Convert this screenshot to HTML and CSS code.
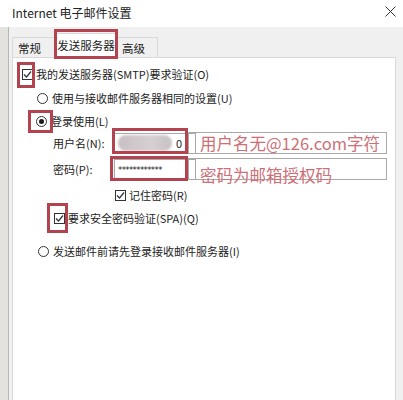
FILE: index.html
```html
<!DOCTYPE html>
<html lang="zh">
<head>
<meta charset="utf-8">
<link rel="stylesheet" href="styles.css">
</head>
<body>
<div class="screen">
  <div class="titlebar">
    <span class="title">Internet 电子邮件设置</span>
    <svg class="close" width="11" height="11" viewBox="0 0 11 11"><path d="M0.5 0.5 L10.5 10.5 M10.5 0.5 L0.5 10.5" stroke="#333" stroke-width="1" fill="none"/></svg>
  </div>
  <div class="main">
    <div class="bgstrip"></div>
    <div class="dialog">
      <div class="tabs">
        <div class="tab tab-general">常规</div>
        <div class="tab tab-active">发送服务器</div>
        <div class="tab tab-adv">高级</div>
      </div>
      <div class="panel">
        <div class="row r1">
          <span class="cb"><svg width="9" height="9" viewBox="0 0 9 9"><path d="M1 4.5 L3.5 7 L8 1.5" stroke="#2b3440" stroke-width="1.2" fill="none"/></svg></span>
          <span class="lbl">我的发送服务器(SMTP)要求验证(O)</span>
        </div>
        <div class="row r2">
          <span class="rb"></span>
          <span class="lbl">使用与接收邮件服务器相同的设置(U)</span>
        </div>
        <div class="row r3">
          <span class="rb on"><span class="dot"></span></span>
          <span class="lbl">登录使用(L)</span>
        </div>
        <div class="row r4">
          <span class="flabel">用户名(N):</span>
          <span class="field"><span class="blur"></span><span class="zero">0</span></span>
        </div>
        <div class="row r5">
          <span class="flabel">密码(P):</span>
          <span class="field"><span class="stars">************</span></span>
        </div>
        <div class="row r6">
          <span class="cb"><svg width="9" height="9" viewBox="0 0 9 9"><path d="M1 4.5 L3.5 7 L8 1.5" stroke="#2b3440" stroke-width="1.2" fill="none"/></svg></span>
          <span class="lbl">记住密码(R)</span>
        </div>
        <div class="row r7">
          <span class="cb"><svg width="9" height="9" viewBox="0 0 9 9"><path d="M1 4.5 L3.5 7 L8 1.5" stroke="#2b3440" stroke-width="1.2" fill="none"/></svg></span>
          <span class="lbl">要求安全密码验证(SPA)(Q)</span>
        </div>
        <div class="row r8">
          <span class="rb"></span>
          <span class="lbl">发送邮件前请先登录接收邮件服务器(I)</span>
        </div>
      </div>
    </div>
  </div>

  <div class="mark m-tab"></div>
  <div class="mark m-cb1"></div>
  <div class="mark m-rb"></div>
  <div class="mark m-user"></div>
  <div class="mark m-pass"></div>
  <div class="mark m-spa"></div>
  <div class="note n-user">用户名无@126.com字符</div>
  <div class="note n-pass">密码为邮箱授权码</div>
</div>
</body>
</html>
```

FILE: styles.css
```css
* { box-sizing: border-box; }
html, body { margin: 0; padding: 0; }
body {
  width: 403px;
  height: 400px;
  overflow: hidden;
  background: #f0f0f0;
  font-family: "Noto Sans CJK SC", "Noto Sans", sans-serif;
  font-size: 11px;
  color: #1c1c1c;
}
.screen {
  position: relative;
  width: 403px;
  height: 400px;
  display: flex;
  flex-direction: column;
}
.titlebar {
  height: 27px;
  background: #ffffff;
  display: flex;
  align-items: center;
  justify-content: space-between;
  padding: 0 7px 2px 12px;
  flex: none;
}
.title { font-size: 12px; color: #222; }
.close { margin-top: -2px; }
.main {
  flex: 1;
  display: flex;
  min-height: 0;
}
.bgstrip {
  width: 9px;
  background: #e4e2df;
  border-right: 1px solid #b8b6b2;
  flex: none;
}
.dialog {
  flex: 1;
  display: flex;
  flex-direction: column;
  padding: 0 7px 0 3px;
}
.tabs {
  height: 30px;
  display: flex;
  align-items: flex-end;
  flex: none;
}
.tab {
  height: 21px;
  border: 1px solid #d9d9d9;
  border-bottom: none;
  background: #f0f0f0;
  display: flex;
  align-items: center;
  justify-content: flex-start;
  font-size: 11.5px;
  margin-bottom: -1px;
}
.tab-general { width: 44px; padding-left: 5px; }
.tab-active {
  width: 60px;
  height: 25px;
  background: #ffffff;
  position: relative;
  z-index: 2;
  padding-bottom: 3px;
  justify-content: center;
}
.tab-adv { width: 42px; border-left: none; padding-left: 6px; }
.panel {
  flex: 1;
  background: #ffffff;
  border: 1px solid #d9d9d9;
  border-bottom: none;
  padding: 6px 0 0 9px;
  display: flex;
  flex-direction: column;
}
.row {
  height: 20px;
  display: flex;
  align-items: center;
  flex: none;
}
.r2 { margin-top: 4px; padding-left: 15px; }
.r3 { margin-top: 3px; padding-left: 14px; }
.r4 { margin-top: 1px; height: 22px; padding-left: 31px; }
.r5 { margin-top: 4px; height: 22px; padding-left: 31px; }
.r6 { margin-top: 5px; padding-left: 93px; }
.r7 { margin-top: 3px; padding-left: 32px; }
.r8 { margin-top: 13px; padding-left: 16px; }
.cb {
  width: 11px;
  height: 11px;
  border: 1px solid #333;
  display: flex;
  align-items: center;
  justify-content: center;
  margin-right: 3px;
  flex: none;
}
.rb {
  width: 11px;
  height: 11px;
  border: 1px solid #333;
  border-radius: 50%;
  display: flex;
  align-items: center;
  justify-content: center;
  margin-right: 4px;
  flex: none;
}
.dot {
  width: 5px;
  height: 5px;
  border-radius: 50%;
  background: #1a1a1a;
}
.lbl { white-space: nowrap; }
.flabel { width: 61px; white-space: nowrap; }
.field {
  width: 82px;
  height: 21px;
  border: 1px solid #a8a8a8;
  display: flex;
  align-items: center;
  padding-left: 3px;
  position: relative;
}
.blur {
  width: 54px;
  height: 16px;
  border-radius: 8px;
  background: linear-gradient(90deg, #c9bfc2, #d6d0d2 60%, #c7c2c4);
  filter: blur(1px);
}
.zero { margin-left: 4px; font-size: 11px; }
.stars {
  font-family: "DejaVu Sans", sans-serif;
  font-size: 8.5px;
  letter-spacing: -0.6px;
  padding-top: 2px;
  color: #222;
}

.mark {
  position: absolute;
  border: 3px solid #b2434f;
  z-index: 5;
}
.m-tab { left: 54px; top: 29px; width: 64px; height: 30px; }
.m-cb1 { left: 17px; top: 62px; width: 18px; height: 26px; }
.m-rb { left: 28px; top: 110px; width: 25px; height: 23px; }
.m-user { left: 112px; top: 128px; width: 76px; height: 26px; }
.m-pass { left: 110px; top: 156px; width: 78px; height: 25px; }
.m-spa { left: 47px; top: 203px; width: 21px; height: 30px; }

.note {
  position: absolute;
  left: 188px;
  width: 199px;
  border: 1.5px solid #a9a9a9;
  color: #cc6f77;
  font-size: 16.5px;
  line-height: 20px;
  padding-left: 11px;
  white-space: nowrap;
  z-index: 4;
  background: transparent;
}
.n-user { top: 132px; height: 22px; }
.n-pass { top: 158px; height: 22px; line-height: 32px; overflow: visible; }
```
